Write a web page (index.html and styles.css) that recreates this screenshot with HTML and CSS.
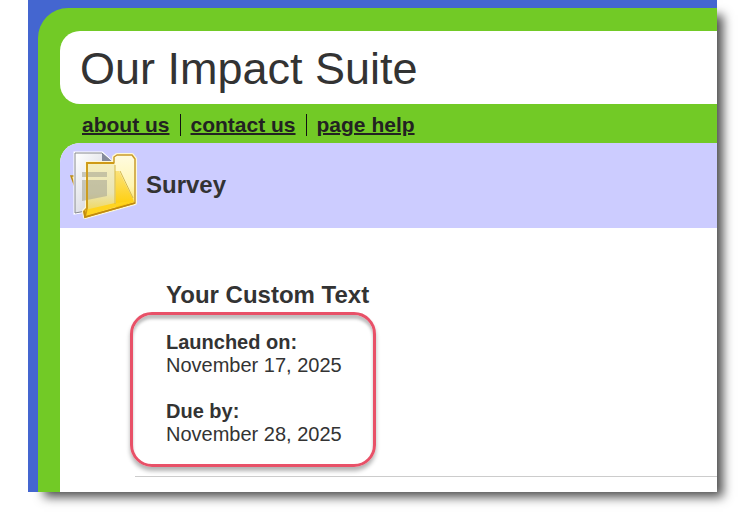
FILE: index.html
```html
<!DOCTYPE html>
<html lang="en">
<head>
<meta charset="utf-8">
<title>Our Impact Suite</title>
<link rel="stylesheet" href="styles.css">
</head>
<body>
<div class="window">
  <div class="frame">
    <header class="banner"><h1>Our Impact Suite</h1></header>
    <nav class="links">
      <a href="#about">about us</a>
      <a href="#contact">contact us</a>
      <a href="#help">page help</a>
    </nav>
    <main class="page">
      <div class="page-title">
        <svg class="folder" viewBox="0 0 68 68" aria-hidden="true">
          <defs>
            <linearGradient id="paper" x1="0" y1="0" x2="1" y2="1">
              <stop offset="0" stop-color="#fff"/><stop offset="1" stop-color="#c4c7d2"/>
            </linearGradient>
            <linearGradient id="back" x1="0" y1="0" x2="0" y2="1">
              <stop offset="0" stop-color="#fffbe0"/><stop offset=".5" stop-color="#fff6b4"/><stop offset="1" stop-color="#fbd22c"/>
            </linearGradient>
            <linearGradient id="glass" x1="0" y1="0" x2="0" y2="1">
              <stop offset="0" stop-color="#f5efbf"/><stop offset=".6" stop-color="#e9e4b4"/><stop offset="1" stop-color="#f2d750"/>
            </linearGradient>
            <linearGradient id="flap" x1="0" y1="0" x2="0" y2="1">
              <stop offset="0" stop-color="#fbe27a"/><stop offset="1" stop-color="#ffcd00"/>
            </linearGradient>
          </defs>
          <path d="M1 25h6v16z" fill="#f3dd8e" stroke="#bb8b18" stroke-width="1.5"/>
          <path d="M5 2h27l12 11v42L5 62z" fill="url(#paper)" stroke="#fff" stroke-width="3"/>
          <path d="M5 2h27l12 11v42L5 62z" fill="url(#paper)" stroke="#85888f"/>
          <path d="M32 2v9h11z" fill="#858b9b"/>
          <path d="M44 12V6l3-2h15l3 4v44L15 66l-1-6 3-3V12z" fill="url(#back)" stroke="#fff8d5" stroke-width="4" stroke-linejoin="round"/>
          <path d="M44 12V6l3-2h15l3 4v44L15 66l-1-6 3-3V12z" fill="url(#back)" stroke="#c99b2b" stroke-width="1.5" stroke-linejoin="round"/>
          <path d="M18 13h27v40l-27 9z" fill="url(#glass)"/>
          <path d="M12 21h25v5H12zM12 29h25v16l-25 5z" fill="#aaa994" opacity=".6"/>
          <path d="M45 20h4l14 28 1 3-18 6z" fill="url(#flap)"/>
          <path d="M15 59l30-7 19-2-48 15z" fill="#ffd420"/>
          <path d="M45 14v39M50 20l13 27" fill="none" stroke="#d4b84b"/>
          <path d="M44 12H17v45l-2 9" fill="none" stroke="#cf9a16" stroke-width="1.8"/>
          <path d="M14 60l1 6 50-14" fill="none" stroke="#c28b0c" stroke-width="1.8"/>
        </svg>
        <h2>Survey</h2>
      </div>
      <section class="survey">
        <h3>Your Custom Text</h3>
        <dl class="dates">
          <div><dt>Launched on:</dt><dd>November 17, 2025</dd></div>
          <div><dt>Due by:</dt><dd>November 28, 2025</dd></div>
        </dl>
        <hr>
      </section>
    </main>
  </div>
</div>
</body>
</html>
```
FILE: styles.css
```css
* { box-sizing: border-box; }

body {
  margin: 0;
  background: #fff;
  color: #333;
  font-family: Arial, "Liberation Sans", sans-serif;
}

h1, h2, h3, dl, dd, hr { margin: 0; }

.window {
  margin: 0 23px 23px 28px;
  padding: 8px 0 0 10px;
  background: #4466d0;
  box-shadow: 11px 10px 10px -5px rgba(0, 0, 0, .7);
}

.frame {
  padding: 23px 0 0 22px;
  background: #72ca26;
  border-top-left-radius: 30px;
}

.banner {
  padding: 13px 20px 10px;
  background: #fff;
  border-radius: 20px 0 0 20px;
}

h1 {
  font-size: 45px;
  font-weight: normal;
  line-height: 50px;
}

.links {
  display: flex;
  align-items: center;
  height: 39px;
  padding: 3px 0 0 12px;
}

.links a {
  padding: 0 10px;
  color: #222;
  font-size: 21px;
  font-weight: bold;
  line-height: 22px;
  text-decoration-thickness: 2px;
}

.links a + a { border-left: 1px solid #111; }

.page {
  overflow: hidden;
  background: #fff;
  border-top-left-radius: 20px;
}

.page-title {
  display: flex;
  align-items: center;
  gap: 8px;
  height: 85px;
  padding: 0 0 1px 10px;
  background: #ccf;
}

.folder { width: 68px; height: 68px; }

h2, h3 {
  font-size: 24px;
  line-height: 28px;
}

.survey { padding: 53px 0 15px 75px; }

h3 { padding-left: 31px; }

.dates {
  display: flex;
  flex-direction: column;
  gap: 23px;
  width: 246px;
  margin: 3px 0 9px -5px;
  padding: 16px 0 18px 33px;
  border: 3px solid #e85168;
  border-radius: 22px;
  box-shadow: 0 4px 4px rgba(0, 0, 0, .3), inset 0 4px 3px rgba(0, 0, 0, .25);
  font-size: 20px;
  line-height: 23px;
}

dt { font-weight: bold; }

hr {
  border: 0;
  border-top: 1px solid #ccc;
}
```
